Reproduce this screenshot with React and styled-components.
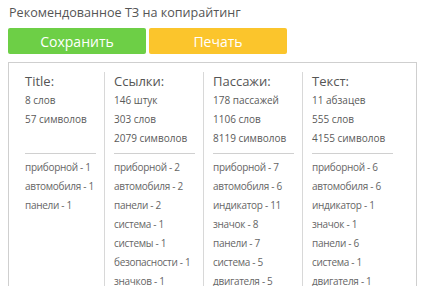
import React from "react";
import styled, { createGlobalStyle } from "styled-components";

const GlobalStyle = createGlobalStyle`
    body {
        margin: 0;
        background: #fff;
        font-family: "Open Sans", "Liberation Sans", sans-serif;
    }
`;

const Page = styled.div`
    padding: 3px 0 0 8px;
`;

const Heading = styled.div`
    font-size: 12.6px;
    line-height: 20px;
    height: 25px;
    color: #555;
    padding-left: 1px;
`;

const Buttons = styled.div`
    display: flex;
    gap: 3px;
`;

const Button = styled.button`
    width: 138px;
    height: 26px;
    border: none;
    border-radius: 2px;
    padding: 0;
    font-family: inherit;
    font-size: 14px;
    color: #fff;
    background: ${props => props.color};
`;

const Panel = styled.div`
    width: 409px;
    box-sizing: border-box;
    margin-top: 8px;
    border: 1px solid #cfcfcf;
    border-bottom: none;
    padding: 9px 15px 0 16px;
    display: grid;
    grid-template-columns: 79px 99px 99px 99px;
    height: 240px;
`;

const Column = styled.div`
    padding: 0 8px 0 ${props => (props.first ? 0 : 9)}px;
    border-left: ${props => (props.first ? "none" : "1px solid #d8d8d8")};
`;

const ColTitle = styled.div`
    font-size: 13px;
    line-height: 19px;
    color: #555;
`;

const Stats = styled.div`
    height: 57px;
`;

const Line = styled.div`
    font-size: 10px;
    letter-spacing: ${props => (props.small ? -0.3 : 0)}px;
    line-height: 19px;
    color: ${props => (props.small ? "#666" : "#5a5a5a")};
    white-space: nowrap;
`;

const Divider = styled.div`
    height: 1px;
    background: #d0d0d0;
    margin: 5px 0 4px;
`;

const columns = [
    {
        title: "Title:",
        stats: ["8 слов", "57 символов"],
        words: ["приборной - 1", "автомобиля - 1", "панели - 1"]
    },
    {
        title: "Ссылки:",
        stats: ["146 штук", "303 слов", "2079 символов"],
        words: [
            "приборной - 2",
            "автомобиля - 2",
            "панели - 2",
            "система - 1",
            "системы - 1",
            "безопасности - 1",
            "значков - 1"
        ]
    },
    {
        title: "Пассажи:",
        stats: ["178 пассажей", "1106 слов", "8119 символов"],
        words: [
            "приборной - 7",
            "автомобиля - 6",
            "индикатор - 11",
            "значок - 8",
            "панели - 7",
            "система - 5",
            "двигателя - 5"
        ]
    },
    {
        title: "Текст:",
        stats: ["11 абзацев", "555 слов", "4155 символов"],
        words: [
            "приборной - 6",
            "автомобиля - 6",
            "индикатор - 1",
            "значок - 1",
            "панели - 6",
            "система - 1",
            "двигателя - 1"
        ]
    }
];

function App() {
    return (
        <Page>
            <GlobalStyle />
            <Heading>Рекомендованное ТЗ на копирайтинг</Heading>
            <Buttons>
                <Button color={"#6dcf46"}>Сохранить</Button>
                <Button color={"#fbc52c"}>Печать</Button>
            </Buttons>
            <Panel>
                {columns.map((col, index) => (
                    <Column key={index} first={index === 0}>
                        <ColTitle>{col.title}</ColTitle>
                        <Stats>
                            {col.stats.map((s, i) => (
                                <Line key={i}>{s}</Line>
                            ))}
                        </Stats>
                        <Divider />
                        {col.words.map((w, i) => (
                            <Line key={i} small>
                                {w}
                            </Line>
                        ))}
                    </Column>
                ))}
            </Panel>
        </Page>
    );
}

export default App;
